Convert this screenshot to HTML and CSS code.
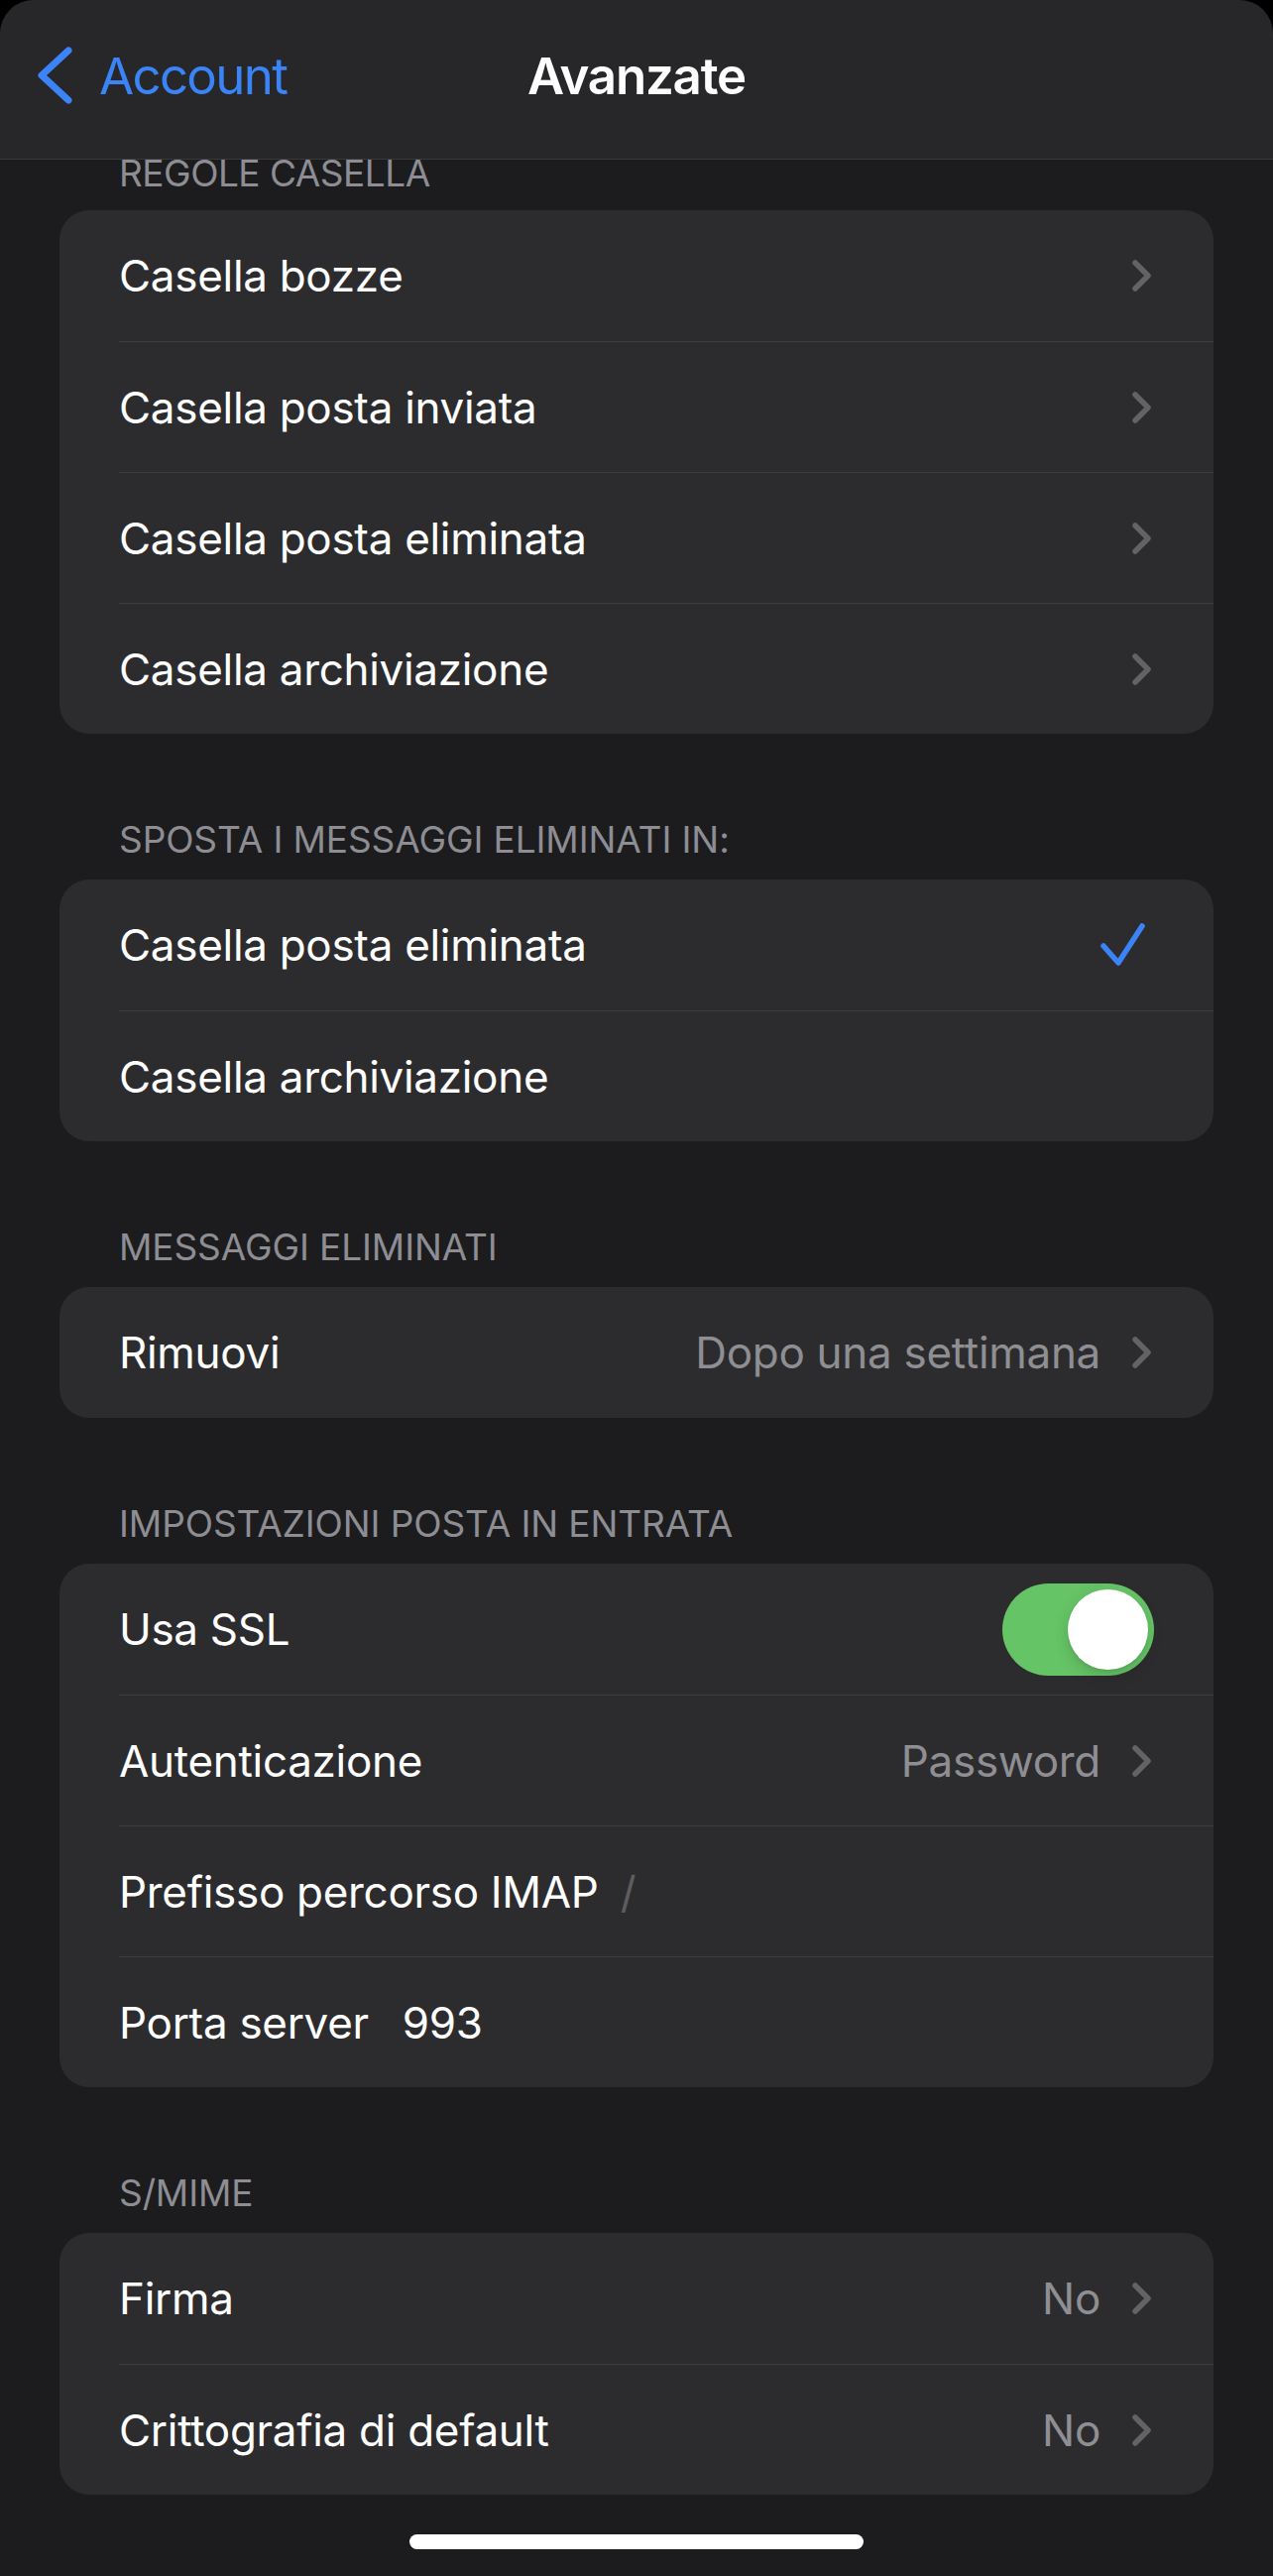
FILE: index.html
```html
<!DOCTYPE html>
<html lang="it">
<head>
    <meta charset="UTF-8">
    <meta name="viewport" content="width=device-width, initial-scale=1.0">
    <title>Avanzate</title>
    <link rel="stylesheet" href="styles.css">
</head>
<body>
<div class="sheet">

    <header class="navbar">
        <a class="back" href="#">
            <svg class="back-icon" width="36" height="60" viewBox="0 0 36 60">
                <path d="M31 5 L4 30 L31 55" fill="none" stroke="currentColor" stroke-width="7" stroke-linecap="round" stroke-linejoin="round"/>
            </svg>
            <span>Account</span>
        </a>
        <h1 class="title">Avanzate</h1>
        <div></div>
    </header>

    <main class="content">

        <section class="group first">
            <h2 class="group-title">REGOLE CASELLA</h2>
            <ul class="card">
                <li class="row"><div class="row-body"><span class="label">Casella bozze</span><span class="trail"><svg class="chevron" width="20" height="32" viewBox="0 0 20 32"><path d="M3 3 L16 16 L3 29" /></svg></span></div></li>
                <li class="row"><div class="row-body"><span class="label">Casella posta inviata</span><span class="trail"><svg class="chevron" width="20" height="32" viewBox="0 0 20 32"><path d="M3 3 L16 16 L3 29" /></svg></span></div></li>
                <li class="row"><div class="row-body"><span class="label">Casella posta eliminata</span><span class="trail"><svg class="chevron" width="20" height="32" viewBox="0 0 20 32"><path d="M3 3 L16 16 L3 29" /></svg></span></div></li>
                <li class="row"><div class="row-body"><span class="label">Casella archiviazione</span><span class="trail"><svg class="chevron" width="20" height="32" viewBox="0 0 20 32"><path d="M3 3 L16 16 L3 29" /></svg></span></div></li>
            </ul>
        </section>

        <section class="group">
            <h2 class="group-title">SPOSTA I MESSAGGI ELIMINATI IN:</h2>
            <ul class="card">
                <li class="row"><div class="row-body"><span class="label">Casella posta eliminata</span><span class="trail"><svg class="check" width="48" height="46" viewBox="0 0 48 46"><path d="M5 24 L20 41 L44 4" /></svg></span></div></li>
                <li class="row"><div class="row-body"><span class="label">Casella archiviazione</span></div></li>
            </ul>
        </section>

        <section class="group">
            <h2 class="group-title">MESSAGGI ELIMINATI</h2>
            <ul class="card">
                <li class="row"><div class="row-body"><span class="label">Rimuovi</span><span class="trail"><span class="value">Dopo una settimana</span><svg class="chevron" width="20" height="32" viewBox="0 0 20 32"><path d="M3 3 L16 16 L3 29" /></svg></span></div></li>
            </ul>
        </section>

        <section class="group">
            <h2 class="group-title">IMPOSTAZIONI POSTA IN ENTRATA</h2>
            <ul class="card">
                <li class="row"><div class="row-body"><span class="label">Usa SSL</span><span class="trail"><span class="switch on"></span></span></div></li>
                <li class="row"><div class="row-body"><span class="label">Autenticazione</span><span class="trail"><span class="value">Password</span><svg class="chevron" width="20" height="32" viewBox="0 0 20 32"><path d="M3 3 L16 16 L3 29" /></svg></span></div></li>
                <li class="row"><div class="row-body"><span class="label">Prefisso percorso IMAP</span><span class="field placeholder">/</span></div></li>
                <li class="row"><div class="row-body"><span class="label">Porta server</span><span class="field">993</span></div></li>
            </ul>
        </section>

        <section class="group">
            <h2 class="group-title">S/MIME</h2>
            <ul class="card">
                <li class="row"><div class="row-body"><span class="label">Firma</span><span class="trail"><span class="value">No</span><svg class="chevron" width="20" height="32" viewBox="0 0 20 32"><path d="M3 3 L16 16 L3 29" /></svg></span></div></li>
                <li class="row"><div class="row-body"><span class="label">Crittografia di default</span><span class="trail"><span class="value">No</span><svg class="chevron" width="20" height="32" viewBox="0 0 20 32"><path d="M3 3 L16 16 L3 29" /></svg></span></div></li>
            </ul>
        </section>

        <div class="home-indicator"></div>
    </main>

</div>
</body>
</html>
```

FILE: styles.css
```css
body {
    margin: 0;
    background-color: #000;
    font-family: Inter, "Noto Sans", sans-serif;
    color: #fff;
}

.sheet {
    background-color: #1c1c1e;
    border-radius: 34px 34px 0 0;
    min-height: 2598px;
    overflow: hidden;
}

/* barra di navigazione */
.navbar {
    position: relative;
    z-index: 1;
    height: 161px;
    box-sizing: border-box;
    padding-bottom: 8px;
    background-color: #272729;
    border-bottom: 1px solid #3a3a3c;
    display: grid;
    grid-template-columns: 1fr auto 1fr;
    align-items: center;
}

.navbar .back {
    display: flex;
    align-items: center;
    gap: 26px;
    padding-left: 38px;
    color: #3a84f7;
    font-size: 51px;
    letter-spacing: -1.7px;
    text-decoration: none;
}

.navbar .title {
    margin: 0;
    font-size: 51px;
    font-weight: 600;
    letter-spacing: -1.2px;
}

/* gruppi */
.content {
    padding: 0 60px;
}

.group {
    margin-top: 84px;
}

.group.first {
    margin-top: -9px;
}

.group.first .group-title {
    margin-bottom: 14px;
    letter-spacing: -0.5px;
}

.group-title {
    margin: 0 0 17px;
    padding-left: 60px;
    font-size: 37px;
    font-weight: 400;
    line-height: 46px;
    letter-spacing: -0.1px;
    color: #8d8d93;
}

.card {
    list-style: none;
    margin: 0;
    padding: 0;
    background-color: #2c2c2e;
    border-radius: 30px;
    overflow: hidden;
}

.row {
    padding-left: 60px;
}

.row-body {
    height: 132px;
    box-sizing: border-box;
    display: flex;
    align-items: center;
    padding-right: 62px;
    font-size: 44px;
    letter-spacing: -0.3px;
}

.row + .row .row-body {
    border-top: 1px solid #3d3d40;
}

.trail {
    margin-left: auto;
    display: flex;
    align-items: center;
    gap: 32px;
}

.value {
    color: #8e8e93;
}

.chevron path {
    fill: none;
    stroke: #636366;
    stroke-width: 5.5;
    stroke-linecap: round;
    stroke-linejoin: round;
}

.check {
    margin-right: 6px;
}

.check path {
    fill: none;
    stroke: #3a84f7;
    stroke-width: 5.5;
    stroke-linecap: round;
    stroke-linejoin: round;
}

.field {
    margin-left: 34px;
}

.field.placeholder {
    margin-left: 22px;
    color: #5d5d61;
}

/* interruttore */
.switch {
    position: relative;
    display: block;
    width: 153px;
    height: 93px;
    margin-right: -2px;
    border-radius: 47px;
    background-color: #3a3a3c;
}

.switch.on {
    background-color: #65c466;
}

.switch::after {
    content: "";
    position: absolute;
    top: 6px;
    left: 6px;
    width: 81px;
    height: 81px;
    border-radius: 50%;
    background-color: #fff;
    box-shadow: 0 6px 16px rgba(0, 0, 0, 0.15), 0 2px 3px rgba(0, 0, 0, 0.06);
}

.switch.on::after {
    left: auto;
    right: 6px;
}

.home-indicator {
    width: 458px;
    height: 15px;
    margin: 40px auto 0;
    border-radius: 8px;
    background-color: #fff;
}
```
